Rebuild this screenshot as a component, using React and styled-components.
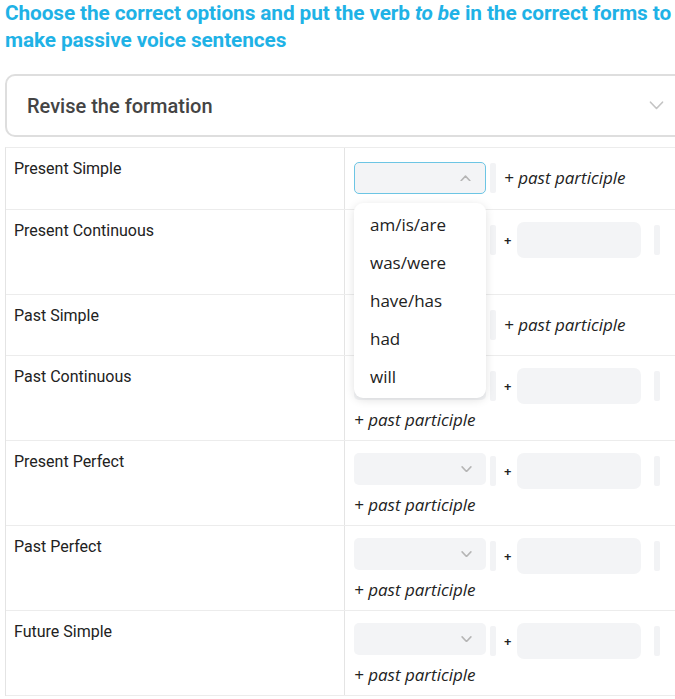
import React from "react";
import styled, { createGlobalStyle } from "styled-components";

const Global = createGlobalStyle`
  html, body { margin: 0; padding: 0; background: #fff; overflow: hidden; }
  body { font-family: Roboto, "Liberation Sans", sans-serif; }
  * { box-sizing: border-box; }
`;

const Page = styled.div`
  width: 690px;
  padding: 0 0 0 5px;
`;

const Title = styled.h1`
  margin: 0;
  padding-top: 0;
  font-family: Roboto, "Liberation Sans", sans-serif;
  font-weight: 700;
  font-size: 20.8px;
  line-height: 27px;
  color: #1fb2e6;
  letter-spacing: -0.1px;
  white-space: nowrap;
  em { font-style: italic; }
`;

const Accordion = styled.div`
  margin-top: 20px;
  height: 63px;
  border: 2px solid #dedede;
  border-radius: 10px;
  display: flex;
  align-items: center;
  justify-content: space-between;
  padding: 0 24px 0 20px;
`;

const AccordionTitle = styled.span`
  font-family: Roboto, "Liberation Sans", sans-serif;
  font-weight: 500;
  font-size: 20px;
  color: #444;
`;

const Table = styled.div`
  margin-top: 10px;
  border-left: 1.5px solid #e4e4e4;
  border-top: 1.5px solid #ececec;
`;

const Row = styled.div`
  display: grid;
  grid-template-columns: 339px 1fr;
  border-bottom: 1.5px solid #ececec;
  min-height: ${(p) => p.$h}px;
`;

const Label = styled.div`
  padding: 10px 8px;
  border-right: 1.5px solid #e4e4e4;
  font-family: Roboto, "Liberation Sans", sans-serif;
  font-size: 16px;
  line-height: 22px;
  color: #222;
`;

const Answer = styled.div`
  position: relative;
  padding: 12px 9px 7px 9px;
  display: flex;
  flex-direction: column;
  gap: 5px;
`;

const Line = styled.div`
  display: flex;
  align-items: center;
  height: 36px;
`;

const Select = styled.div`
  position: relative;
  width: 132px;
  height: 32px;
  border-radius: 5px;
  background: #f3f4f6;
  border: ${(p) => (p.$focus ? "1.5px solid #6cc5e4" : "none")};
  display: flex;
  align-items: center;
  justify-content: flex-end;
  padding-right: 14px;
  align-self: ${(p) => (p.$top ? "flex-start" : "center")};
`;

const Bar = styled.div`
  width: 6px;
  height: 30px;
  background: #f2f3f5;
  border-radius: 2px;
  margin-left: ${(p) => p.$ml}px;
`;

const Plus = styled.span`
  margin-left: 8px;
  font-family: "Open Sans", sans-serif;
  font-weight: 700;
  font-size: 13px;
  color: #222;
`;

const Input = styled.div`
  width: 124px;
  height: 36px;
  margin-left: 6px;
  border-radius: 7px;
  background: #f3f4f6;
`;

const Participle = styled.span`
  margin-left: ${(p) => p.$ml || 0}px;
  font-family: "Open Sans", sans-serif;
  font-style: italic;
  font-weight: 500;
  font-size: 17px;
  line-height: 22px;
  color: #222;
  white-space: nowrap;
`;

const Menu = styled.div`
  position: absolute;
  left: 9px;
  top: 55px;
  width: 132px;
  padding: 2px 0 3px;
  background: #fff;
  border-radius: 9px;
  box-shadow: 0 2px 10px rgba(0, 0, 0, 0.12);
  z-index: 5;
`;

const Option = styled.div`
  height: 38px;
  display: flex;
  align-items: center;
  padding-left: 16px;
  font-family: "Open Sans", sans-serif;
  font-weight: 500;
  font-size: 17px;
  color: #222;
`;

const Chevron = ({ up, size = 11, color = "#b5b5b5", w = 1.4 }) => (
  <svg width={size} height={size * 0.6} viewBox="0 0 10 6" fill="none">
    <path
      d={up ? "M1 5.2 L5 1 L9 5.2" : "M1 0.8 L5 5 L9 0.8"}
      stroke={color}
      strokeWidth={w}
      strokeLinecap="round"
      strokeLinejoin="round"
    />
  </svg>
);

const rows = [
  { label: "Present Simple", simple: true, focus: true, h: 62 },
  { label: "Present Continuous", h: 85 },
  { label: "Past Simple", simple: true, h: 61 },
  { label: "Past Continuous", h: 85 },
  { label: "Present Perfect", h: 85 },
  { label: "Past Perfect", h: 85 },
  { label: "Future Simple", h: 85 },
];

const options = ["am/is/are", "was/were", "have/has", "had", "will"];

export default function App() {
  return (
    <Page>
      <Global />
      <Title>
        Choose the correct options and put the verb <em>to be</em> in the correct forms to
        <br />
        make passive voice sentences
      </Title>
      <Accordion>
        <AccordionTitle>Revise the formation</AccordionTitle>
        <Chevron size={15} color="#c4c4c4" w={1.1} />
      </Accordion>
      <Table>
        {rows.map((r) => (
          <Row key={r.label} $h={r.h}>
            <Label>{r.label}</Label>
            <Answer>
              {r.simple ? (
                <Line>
                  <Select $focus={r.focus}>
                    <Chevron up={r.focus} />
                  </Select>
                  <Bar $ml={4} />
                  <Participle $ml={8}>+ past participle</Participle>
                </Line>
              ) : (
                <>
                  <Line>
                    <Select $top>
                      <Chevron />
                    </Select>
                    <Bar $ml={4} />
                    <Plus>+</Plus>
                    <Input />
                    <Bar $ml={13} />
                  </Line>
                  <Participle>+ past participle</Participle>
                </>
              )}
              {r.focus && (
                <Menu>
                  {options.map((o) => (
                    <Option key={o}>{o}</Option>
                  ))}
                </Menu>
              )}
            </Answer>
          </Row>
        ))}
      </Table>
    </Page>
  );
}
